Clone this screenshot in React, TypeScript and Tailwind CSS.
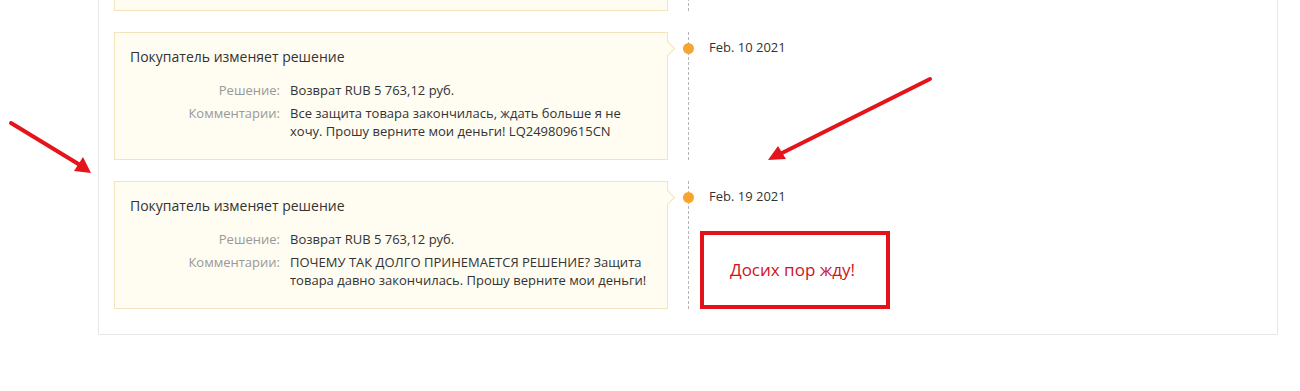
import React from "react";

type Entry = {
	date: string;
	decision: string;
	comment: string;
	note?: string;
};

const entries: Entry[] = [
	{
		date: "Feb. 10 2021",
		decision: "Возврат RUB 5 763,12 руб.",
		comment:
			"Все защита товара закончилась, ждать больше я не хочу. Прошу верните мои деньги! LQ249809615CN"
	},
	{
		date: "Feb. 19 2021",
		decision: "Возврат RUB 5 763,12 руб.",
		comment:
			"ПОЧЕМУ ТАК ДОЛГО ПРИНЕМАЕТСЯ РЕШЕНИЕ? Защита товара давно закончилась. Прошу верните мои деньги!",
		note: "Досих пор жду!"
	}
];

function Dot() {
	return (
		<div className="absolute -left-[5px] top-[11px] w-[11px] h-[11px] rounded-full bg-[#f7a531]" />
	);
}

function Card({ entry }: { entry: Entry }) {
	return (
		<div className="relative w-[554px] shrink-0 border border-[#f3e4bd] bg-[#fffcf2] px-[15px] pt-[14px] pb-[19px]">
			<div className="absolute -right-[6px] top-[10px] w-[11px] h-[11px] rotate-45 border-t border-r border-[#f3e4bd] bg-[#fffcf2]" />
			<div className="text-[14px] leading-[20px] text-[#333]">
				Покупатель изменяет решение
			</div>
			<div className="mt-[14px] grid grid-cols-[150px_1fr] gap-x-[10px] gap-y-[5px] text-[13px] leading-[18px]">
				<div className="text-right text-[#999]">Решение:</div>
				<div className="text-[#333]">{entry.decision}</div>
				<div className="text-right text-[#999]">Комментарии:</div>
				<div className="text-[#333]">{entry.comment}</div>
			</div>
		</div>
	);
}

function Row({ entry, last }: { entry: Entry; last?: boolean }) {
	return (
		<div className={`flex ${last ? "pb-[10px]" : "pb-[21px]"}`}>
			<Card entry={entry} />
			<div className="w-[20px] shrink-0" />
			<div className="relative border-l border-dashed border-[#b5b5b5]" />
			<div className="relative -ml-px">
				<Dot />
			</div>
			<div className="flex flex-col">
				<div className="ml-[21px] mt-[6px] text-[13px] leading-[18px] text-[#333]">
					{entry.date}
				</div>
				{entry.note && (
					<div className="ml-[12px] mt-[26px] flex h-[78px] w-[190px] items-center border-[4px] border-[#e3121a] pl-[26px] text-[17px] text-[#d0121b]">
						{entry.note}
					</div>
				)}
			</div>
		</div>
	);
}

function Arrows() {
	return (
		<svg
			className="absolute inset-0 pointer-events-none"
			width="1300"
			height="391"
			viewBox="0 0 1300 391"
		>
			<line x1="11" y1="123" x2="80" y2="165" stroke="#e5141a" strokeWidth="4" strokeLinecap="round" />
			<polygon points="91,173 74,171 83,157" fill="#e5141a" />
			<line x1="930" y1="79" x2="782" y2="153" stroke="#e5141a" strokeWidth="4" strokeLinecap="round" />
			<polygon points="768,160 778,146 786,159" fill="#e5141a" />
		</svg>
	);
}

export default function App() {
	return (
		<div
			className="relative w-[1300px] h-[391px] overflow-hidden bg-white"
			style={{ fontFamily: '"Open Sans", "Noto Sans", sans-serif' }}
		>
			<div className="ml-[98px] -mt-[138px] w-[1180px] border border-[#e6e6e6] pl-[15px] pt-[20px] pb-[15px]">
				<div className="flex pb-[21px]">
					<div className="w-[554px] h-[128px] border border-[#f3e4bd] bg-[#fffcf2]" />
					<div className="w-[20px] shrink-0" />
					<div className="border-l border-dashed border-[#b5b5b5]" />
				</div>
				{entries.map((e, i) => (
					<Row key={e.date} entry={e} last={i === entries.length - 1} />
				))}
			</div>
			<Arrows />
		</div>
	);
}
